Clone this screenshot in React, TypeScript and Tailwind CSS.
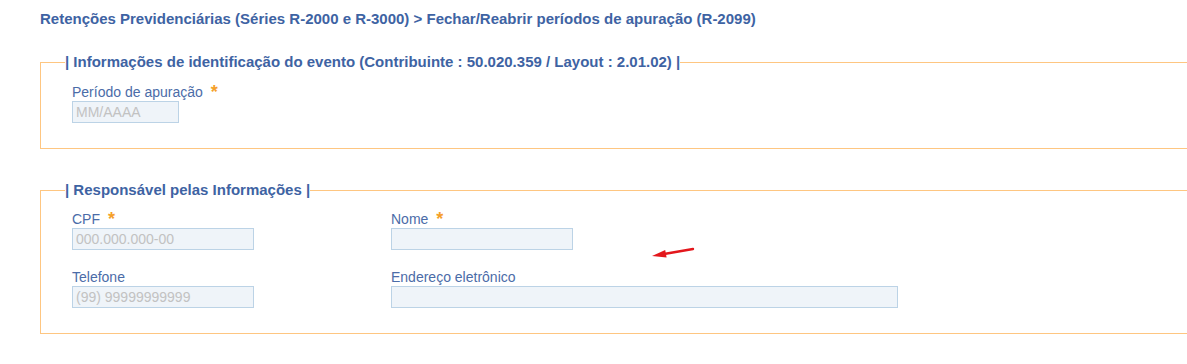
import React from "react";

const font = { fontFamily: '"Liberation Sans", Arial, sans-serif' };

export default function App() {
  return (
    <main
      style={font}
      className="relative min-h-screen overflow-hidden bg-white pl-10 pt-[9px]"
    >
      <h1 className="text-[15px] font-bold leading-[20px] text-[#3e63a3]">
        Retenções Previdenciárias (Séries R-2000 e R-3000) &gt; Fechar/Reabrir
        períodos de apuração (R-2099)
      </h1>

      {/* evento */}
      <fieldset className="-mr-6 mt-[23px] border border-[#fec681] p-0">
        <legend className="ml-[24px] p-0 text-[15px] font-bold leading-[20px] text-[#3e63a3]">
          | Informações de identificação do evento (Contribuinte : 50.020.359 /
          Layout : 2.01.02) |
        </legend>
        <div className="pb-[25px] pl-[31px] pt-[12px]">
          {RenderField("Período de apuração", "MM/AAAA", "w-[107px]", true)}
        </div>
      </fieldset>

      {/* responsavel */}
      <fieldset className="-mr-6 mt-[31px] border border-[#fec681] p-0">
        <legend className="ml-[24px] p-0 text-[15px] font-bold leading-[20px] text-[#3e63a3]">
          | Responsável pelas Informações |
        </legend>
        <div className="grid grid-cols-[319px_1fr] gap-y-[19px] pb-[25px] pl-[31px] pt-[11px]">
          {RenderField("CPF", "000.000.000-00", "w-[182px]", true)}
          {RenderField("Nome", "", "w-[182px]", true)}
          {RenderField("Telefone", "(99) 99999999999", "w-[182px]", false)}
          {RenderField("Endereço eletrônico", "", "w-[507px]", false)}
        </div>
      </fieldset>

      {/* seta vermelha */}
      <svg
        className="absolute left-[648px] top-[244px]"
        width="50"
        height="18"
        viewBox="0 0 50 18"
      >
        <line
          x1="45"
          y1="5"
          x2="16"
          y2="10"
          stroke="#e3171c"
          strokeWidth="2.4"
          strokeLinecap="round"
        />
        <polygon points="4,12 17.2,6 18.6,13.4" fill="#e3171c" />
      </svg>
    </main>
  );

  function RenderField(
    label: string,
    placeholder: string,
    width: string,
    required: boolean
  ) {
    return (
      <div className="flex flex-col">
        <label className="flex items-start text-[14px] leading-[17px] text-[#4b6ca8]">
          {label}
          {required && (
            <span className="ml-[8px] text-[18px] font-bold leading-[17px] text-[#f5a02a]">
              *
            </span>
          )}
        </label>
        <input
          readOnly
          placeholder={placeholder}
          style={font}
          className={`h-[22px] ${width} border border-[#bcd3e6] bg-[#eff4f9] px-[3px] text-[14px] outline-none placeholder:text-[#c2c2c2]`}
        />
      </div>
    );
  }
}
